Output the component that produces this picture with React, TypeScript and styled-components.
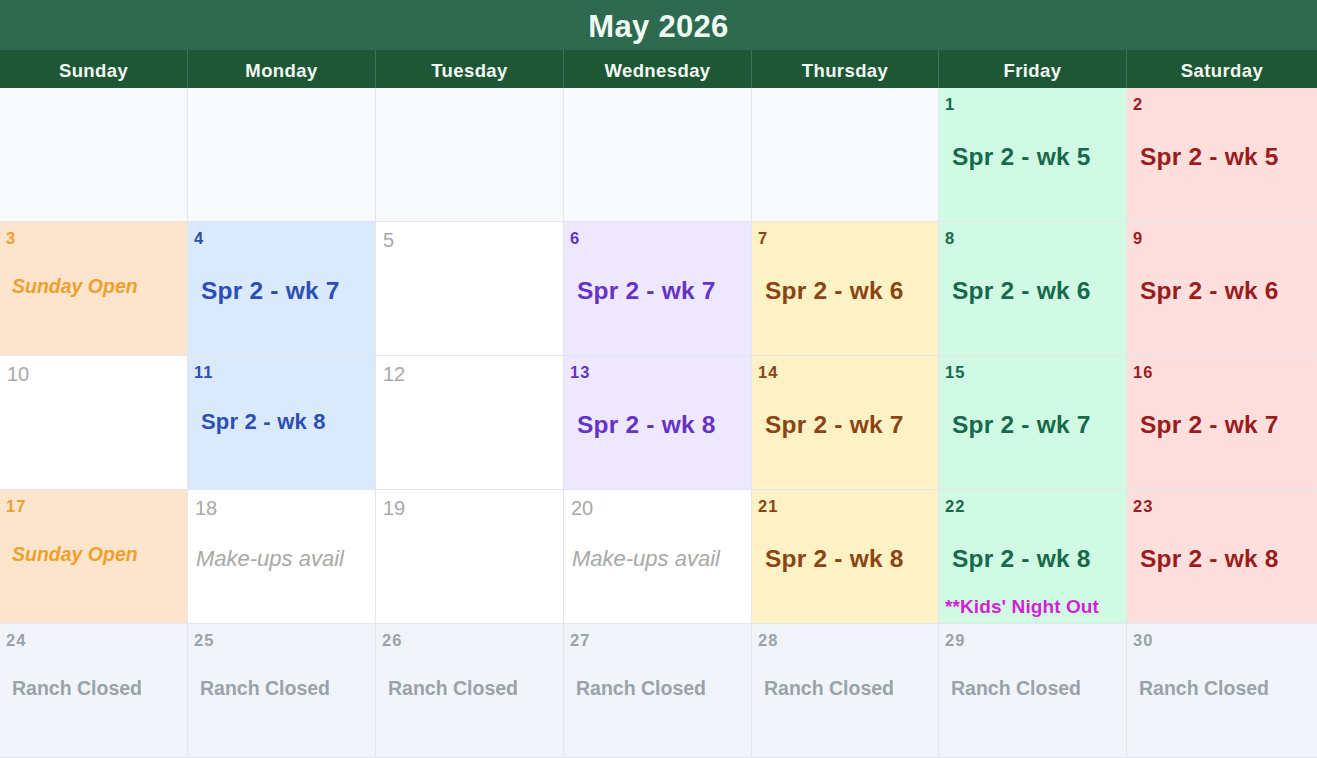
import React from "react";
import styled, { createGlobalStyle } from "styled-components";

const Global = createGlobalStyle`
  html, body { margin: 0; padding: 0; background: #ffffff; }
  body { font-family: "Liberation Sans", Arial, sans-serif; }
`;

type Tone = "empty" | "plain" | "sun" | "mon" | "wed" | "thu" | "fri" | "sat" | "closed";

const palette: Record<Tone, { bg: string; fg: string }> = {
  empty: { bg: "#f8fafc", fg: "#9ca3af" },
  plain: { bg: "#ffffff", fg: "#a9a9a9" },
  sun: { bg: "#fde4cd", fg: "#eea12a" },
  mon: { bg: "#dbe9fd", fg: "#2b4fb3" },
  wed: { bg: "#ede8fe", fg: "#6633c4" },
  thu: { bg: "#fdf2c6", fg: "#8b4513" },
  fri: { bg: "#d1fae5", fg: "#16694a" },
  sat: { bg: "#fde0dd", fg: "#9b1c1c" },
  closed: { bg: "#f1f5f9", fg: "#9aa2ab" },
};

const columns = "188px 188px 188px 188px 187px 188px 1fr";

const Calendar = styled.div`
  width: 1317px;
  height: 758px;
  display: grid;
  grid-template-rows: 50px 38px repeat(5, 134px);
  overflow: hidden;
`;

const Title = styled.div`
  background: #2e6a4f;
  color: #effcf3;
  font-weight: 700;
  font-size: 31px;
  letter-spacing: 0.3px;
  display: flex;
  align-items: center;
  justify-content: center;
  padding-top: 4px;
  box-sizing: border-box;
`;

const HeaderRow = styled.div`
  display: grid;
  grid-template-columns: ${columns};
  background: #1f5636;
`;

const HeaderCell = styled.div`
  color: #f1fbf4;
  font-weight: 700;
  font-size: 18.5px;
  letter-spacing: 0.4px;
  display: flex;
  align-items: center;
  justify-content: center;
  padding-top: 3px;
  box-sizing: border-box;
  border-right: 1px solid #3a7152;
  &:last-child { border-right: none; }
`;

const WeekRow = styled.div`
  display: grid;
  grid-template-columns: ${columns};
`;

const Cell = styled.div<{ $tone: Tone }>`
  background: ${(p) => palette[p.$tone].bg};
  color: ${(p) => palette[p.$tone].fg};
  border-right: 1px solid #e3e7ec;
  border-bottom: 1px solid #e3e7ec;
  padding: 6px 7px 0 6px;
  box-sizing: border-box;
  display: flex;
  flex-direction: column;
  align-items: flex-start;
  &:last-child { border-right: none; }
`;

const DayNum = styled.div<{ $light?: boolean }>`
  font-weight: ${(p) => (p.$light ? 400 : 700)};
  font-size: ${(p) => (p.$light ? "20px" : "16.5px")};
  line-height: ${(p) => (p.$light ? "24px" : "18px")};
  letter-spacing: ${(p) => (p.$light ? "0" : "1px")};
  margin-top: ${(p) => (p.$light ? "0" : "1px")};
  margin-left: ${(p) => (p.$light ? "1px" : "0")};
`;

const Event = styled.div<{ $size?: number; $top: number; $indent: number }>`
  font-weight: 700;
  font-size: ${(p) => p.$size ?? 24}px;
  letter-spacing: 0.2px;
  line-height: 28px;
  margin-top: ${(p) => p.$top}px;
  margin-left: ${(p) => p.$indent}px;
  white-space: nowrap;
`;

const Note = styled.div<{ $top: number; $indent: number; $size: number }>`
  font-weight: 700;
  font-style: italic;
  font-size: ${(p) => p.$size}px;
  line-height: 22px;
  margin-top: ${(p) => p.$top}px;
  margin-left: ${(p) => p.$indent}px;
  white-space: nowrap;
`;

const MakeUp = styled.div`
  font-style: italic;
  font-size: 22px;
  line-height: 26px;
  color: #a8a8a8;
  margin-top: 26px;
  margin-left: 2px;
  white-space: nowrap;
`;

const Closed = styled.div`
  font-weight: 700;
  font-size: 19.5px;
  line-height: 22px;
  margin-top: 28px;
  margin-left: 6px;
  white-space: nowrap;
`;

const Kids = styled.div`
  font-weight: 700;
  font-size: 19px;
  line-height: 20px;
  letter-spacing: 0.1px;
  color: #d61ed6;
  margin-top: auto;
  margin-bottom: 6px;
  white-space: nowrap;
`;

type Day = {
  n?: number;
  tone: Tone;
  event?: string;
  small?: boolean;
  sunday?: boolean;
  makeup?: boolean;
  kids?: boolean;
};

const weeks: Day[][] = [
  [
    { tone: "empty" },
    { tone: "empty" },
    { tone: "empty" },
    { tone: "empty" },
    { tone: "empty" },
    { n: 1, tone: "fri", event: "Spr 2 - wk 5" },
    { n: 2, tone: "sat", event: "Spr 2 - wk 5" },
  ],
  [
    { n: 3, tone: "sun", sunday: true },
    { n: 4, tone: "mon", event: "Spr 2 - wk 7" },
    { n: 5, tone: "plain" },
    { n: 6, tone: "wed", event: "Spr 2 - wk 7" },
    { n: 7, tone: "thu", event: "Spr 2 - wk 6" },
    { n: 8, tone: "fri", event: "Spr 2 - wk 6" },
    { n: 9, tone: "sat", event: "Spr 2 - wk 6" },
  ],
  [
    { n: 10, tone: "plain" },
    { n: 11, tone: "mon", event: "Spr 2 - wk 8", small: true },
    { n: 12, tone: "plain" },
    { n: 13, tone: "wed", event: "Spr 2 - wk 8" },
    { n: 14, tone: "thu", event: "Spr 2 - wk 7" },
    { n: 15, tone: "fri", event: "Spr 2 - wk 7" },
    { n: 16, tone: "sat", event: "Spr 2 - wk 7" },
  ],
  [
    { n: 17, tone: "sun", sunday: true },
    { n: 18, tone: "plain", makeup: true },
    { n: 19, tone: "plain" },
    { n: 20, tone: "plain", makeup: true },
    { n: 21, tone: "thu", event: "Spr 2 - wk 8" },
    { n: 22, tone: "fri", event: "Spr 2 - wk 8", kids: true },
    { n: 23, tone: "sat", event: "Spr 2 - wk 8" },
  ],
  [24, 25, 26, 27, 28, 29, 30].map((n) => ({ n, tone: "closed" as Tone })),
];

const dayNames = ["Sunday", "Monday", "Tuesday", "Wednesday", "Thursday", "Friday", "Saturday"];

function DayCell({ d }: { d: Day }) {
  return (
    <Cell $tone={d.tone}>
      {d.n !== undefined && <DayNum $light={d.tone === "plain"}>{d.n}</DayNum>}
      {d.event && (
        <Event $size={d.small ? 22 : 24.5} $top={d.small ? 27 : 30} $indent={7}>
          {d.event}
        </Event>
      )}
      {d.sunday && (
        <Note $size={19.5} $top={28} $indent={6}>
          Sunday Open
        </Note>
      )}
      {d.makeup && <MakeUp>Make-ups avail</MakeUp>}
      {d.tone === "closed" && <Closed>Ranch Closed</Closed>}
      {d.kids && <Kids>**Kids' Night Out</Kids>}
    </Cell>
  );
}

export default function App() {
  return (
    <>
      <Global />
      <Calendar>
        <Title>May 2026</Title>
        <HeaderRow>
          {dayNames.map((d) => (
            <HeaderCell key={d}>{d}</HeaderCell>
          ))}
        </HeaderRow>
        {weeks.map((w, i) => (
          <WeekRow key={i}>
            {w.map((d, j) => (
              <DayCell key={j} d={d} />
            ))}
          </WeekRow>
        ))}
      </Calendar>
    </>
  );
}
